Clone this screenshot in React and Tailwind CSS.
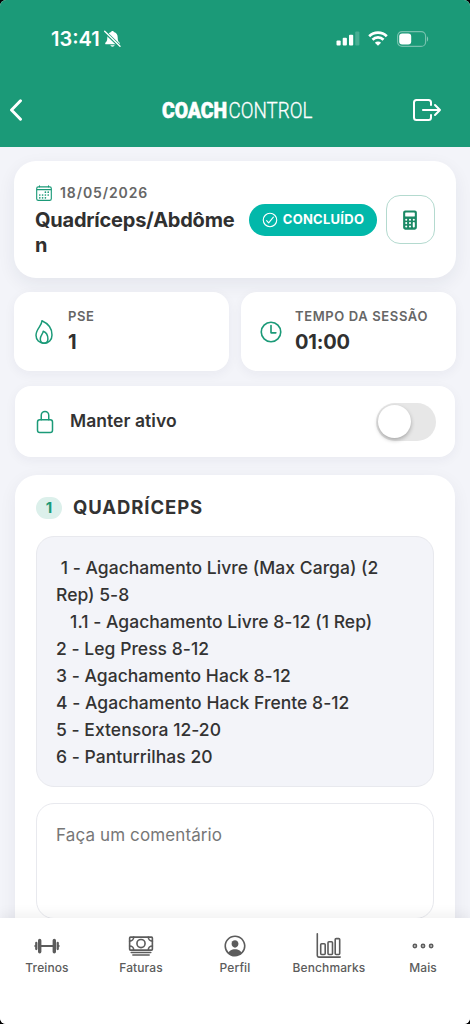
import {
  IoExitOutline,
  IoCalculator,
  IoTimeOutline,
  IoLockClosedOutline,
  IoCheckmarkCircleOutline,
  IoPersonCircleOutline,
  IoCalendarOutline,
  IoCashOutline,
  IoEllipsisHorizontalOutline,
} from 'react-icons/io5';

const exercises = [
  ' 1 - Agachamento Livre (Max Carga) (2',
  'Rep) 5-8',
  '   1.1 - Agachamento Livre 8-12 (1 Rep)',
  '2 - Leg Press 8-12',
  '3 - Agachamento Hack 8-12',
  '4 - Agachamento Hack Frente 8-12',
  '5 - Extensora 12-20',
  '6 - Panturrilhas 20',
];

function BellOff() {
  return (
    <svg className="h-[18px] w-[17px]" viewBox="0 0 17 18" fill="white">
      <path d="M8.5 1c-.8 0-1.3.5-1.4 1.1C4.600 2.800 3.300 5 3.300 7.500c0 3-.6 4-1.700 5.100-.4.400-.5.800-.4 1.100.1.400.4.600.9.600h12.800c.5 0 .8-.2.900-.6.100-.3 0-.7-.4-1.100-1.100-1.100-1.700-2.100-1.700-5.100 0-2.500-1.300-4.700-3.800-5.400C9.800 1.500 9.300 1 8.500 1zM6.300 15.300a2.300 2.100 0 0 0 4.400 0z" />
      <path d="M.2 1.200 16.600 17" stroke="#1b9a78" strokeWidth="3.200" />
      <path d="M.7 1.200 16 16.200" stroke="white" strokeWidth="1.400" strokeLinecap="round" />
    </svg>
  );
}

function Signal() {
  return (
    <svg className="h-[15px] w-[24px]" viewBox="0 0 24 15" fill="white">
      <rect x="0.500" y="9.500" width="4.200" height="5" rx="1" />
      <rect x="6.700" y="6.700" width="4.200" height="7.800" rx="1" />
      <rect x="13" y="3.700" width="4.200" height="10.800" rx="1" />
      <rect x="19.200" y="0.500" width="4.200" height="14" rx="1" opacity=".2" />
    </svg>
  );
}

function Wifi() {
  return (
    <svg className="h-[15px] w-[20px]" viewBox="0 0 20 15" fill="none" stroke="white" strokeWidth="2.700">
      <path d="M1.200 5.200a12.500 12.500 0 0 1 17.600 0" />
      <path d="M4.500 8.700a7.800 7.800 0 0 1 11 0" />
      <path d="M10 14.800 6.900 11.700a4.400 4.400 0 0 1 6.200 0z" fill="white" stroke="none" />
    </svg>
  );
}

function Battery() {
  return (
    <svg className="h-[16px] w-[32px]" viewBox="0 0 32 16" fill="none">
      <rect x=".6" y=".6" width="28" height="14.800" rx="4.500" stroke="white" strokeOpacity=".4" strokeWidth="1.200" />
      <path d="M30 5.500c1.500.6 1.500 4.400 0 5z" fill="white" opacity=".45" />
      <rect x="2.200" y="2.400" width="12" height="11.200" rx="3" fill="white" />
    </svg>
  );
}

function Logo() {
  return (
    <div className="flex w-[152px]">
      <svg className="h-[36px] w-[66px] overflow-visible" viewBox="0 0 66 36" fill="white" fontFamily="Roboto, sans-serif" fontSize="22.8">
        <text x="0" y="26" fontWeight="900" textLength="65" lengthAdjust="spacingAndGlyphs" stroke="white" strokeWidth=".6">COACH</text>
      </svg>
      <svg className="h-[36px] w-[86px] overflow-visible" viewBox="0 0 86 36" fill="white" fontFamily="Roboto, sans-serif" fontSize="22.8">
        <text x="0.500" y="26" fontWeight="300" textLength="84" lengthAdjust="spacingAndGlyphs" stroke="white" strokeWidth=".3">CONTROL</text>
      </svg>
    </div>
  );
}

function Flame() {
  return (
    <svg className="h-[24px] w-[18px]" viewBox="0 0 18 24" fill="none" stroke="#1b9a78" strokeWidth="1.500" strokeLinejoin="round">
      <path d="M6.900 .8C7.200 5.500 1 9 1 15.200c0 4.700 3.400 8 8 8s8-3.300 8-8.300C17 7.800 12.500 3.300 6.900 .8z" />
      <path d="M8.200 11.200c0 2.500-2.900 4.300-2.900 7.800 0 2.600 1.500 4.200 3.700 4.200s3.900-1.600 3.900-4.200c0-3.900-2.100-6.800-4.700-7.800z" />
    </svg>
  );
}

function Barbell() {
  return (
    <svg className="h-[24px] w-[26px]" viewBox="0 0 26 24" fill="none" stroke="#5c5c5c" strokeLinecap="round">
      <path d="M5.500 12h15M1.200 11.900v.2M24.800 11.900v.2" strokeWidth="1.800" />
      <path d="M5.700 6.500v11.200M20.300 6.500v11.200" strokeWidth="3.400" />
      <path d="M2.300 9v6M23.700 9v6" strokeWidth="2.300" />
    </svg>
  );
}

function Chart() {
  return (
    <svg className="h-[26px] w-[26px]" viewBox="0 0 26 26" fill="none" stroke="#5c5c5c" strokeWidth="1.600" strokeLinecap="round" strokeLinejoin="round">
      <path d="M1.300 .8v21.800q0 1.500 1.500 1.500h21.400" />
      <rect x="4.700" y="10.800" width="4.500" height="10.700" rx="1" />
      <rect x="12" y="8.700" width="4.500" height="12.800" rx="1" />
      <rect x="19.200" y="5.600" width="4.500" height="15.900" rx="1" />
    </svg>
  );
}

const tabs = [
  { label: 'Treinos', icon: <Barbell /> },
  { label: 'Faturas', icon: <IoCashOutline size={26} /> },
  { label: 'Perfil', icon: <IoPersonCircleOutline size={26} /> },
  { label: 'Benchmarks', icon: <Chart /> },
  { label: 'Mais', icon: <IoEllipsisHorizontalOutline size={26} /> },
];

function Metric({ icon, label, value }) {
  return (
    <div className="flex h-[79px] flex-1 items-center rounded-2xl bg-white pl-[17px] shadow-[0_3px_12px_rgba(30,40,70,0.05)]">
      <div className="flex w-[25px] justify-center text-[#1b9a78]">{icon}</div>
      <div className="ml-3 -mt-[2px] whitespace-nowrap">
        <div className="text-[13px] leading-[20px] font-semibold tracking-[0.62px] text-[#666]">{label}</div>
        <div className="mt-[3px] text-[20px] leading-[26px] font-bold tracking-[-0.2px] text-[#303030]">{value}</div>
      </div>
    </div>
  );
}

export default function App() {
  return (
    <div className="h-[1024px] w-[470px] overflow-hidden bg-black font-['Inter',sans-serif] text-[#333]">
      <div className="flex h-full flex-col overflow-hidden rounded-[6px] bg-[#f3f4f9]">
        <header className="h-[147px] shrink-0 bg-[#1b9a78] text-white">
          <div className="flex h-[75px] items-center pt-[2px] pr-[41px] pl-[51px]">
            <span className="text-[20px] font-semibold tracking-[0px]">13:41</span>
            <span className="ml-[4px]"><BellOff /></span>
            <span className="ml-auto"><Signal /></span>
            <span className="ml-[8px]"><Wifi /></span>
            <span className="ml-[9px]"><Battery /></span>
          </div>
          <div className="flex h-[70px] items-center justify-between pr-[27px] pl-[3px]">
            <div className="w-[158px] pl-[6px]">
              <svg className="h-[22px] w-[14px]" viewBox="0 0 14 22" fill="none" stroke="white" strokeWidth="2.900" strokeLinecap="round" strokeLinejoin="round">
                <path d="M11.500 1.800 2.500 11l9 9.200" />
              </svg>
            </div>
            <Logo />
            <div className="flex w-[128px] justify-end"><IoExitOutline size={32} /></div>
          </div>
        </header>

        <main className="flex min-h-0 flex-1 flex-col overflow-hidden px-[14px] pt-[14px]">
          <section className="flex h-[117px] shrink-0 items-center rounded-[22px] bg-white pr-[21px] pl-[21px] shadow-[0_6px_18px_rgba(30,40,70,0.07)]">
            <div className="w-[202px]">
              <div className="flex items-center gap-[7px] pt-px text-[14px] leading-[20px] font-semibold tracking-[0.9px] text-[#666]">
                <IoCalendarOutline size={18} className="text-[#1b9a78]" />
                18/05/2026
              </div>
              <h1 className="mt-[5px] text-[20px] leading-[25px] font-bold tracking-[-0.23px] whitespace-nowrap text-[#303030]">
                Quadríceps/Abdôme<br />n
              </h1>
            </div>
            <div className="ml-[12px] flex h-[32px] w-[128px] shrink-0 items-center justify-center gap-[4px] rounded-full bg-[#02b8aa] text-[13px] font-bold tracking-[0.25px] text-white">
              <IoCheckmarkCircleOutline size={18} className="-ml-px" />
              CONCLUÍDO
            </div>
            <div className="ml-auto flex size-[49px] shrink-0 items-center justify-center rounded-[14px] border border-[#b4dacf] pr-[2px] text-[#1b8965]">
              <IoCalculator size={22} />
            </div>
          </section>

          <section className="mt-[14px] flex shrink-0 gap-[12px]">
            <Metric icon={<Flame />} label="PSE" value="1" />
            <Metric icon={<IoTimeOutline size={26} className="shrink-0" />} label="TEMPO DA SESSÃO" value="01:00" />
          </section>

          <section className="mx-px mt-[15px] flex h-[71px] shrink-0 items-center rounded-2xl bg-white pr-[19px] pl-[18px] shadow-[0_3px_12px_rgba(30,40,70,0.05)]">
            <IoLockClosedOutline size={24} className="text-[#1b9a78]" />
            <span className="ml-[13px] text-[17.5px] font-semibold tracking-[0.05px]">Manter ativo</span>
            <div className="ml-auto flex h-[38px] w-[60px] items-center rounded-full bg-[#e7e7e7] pl-[2px]">
              <div className="size-[33px] rounded-full bg-white shadow-[0_2px_4px_rgba(0,0,0,0.28)]" />
            </div>
          </section>

          <section className="mx-px mt-[18px] h-[550px] shrink-0 rounded-[22px] bg-white px-[21px] shadow-[0_5px_18px_rgba(30,40,70,0.06)]">
            <div className="flex h-[61px] items-center pt-[5px]">
              <span className="flex h-[22px] w-[26px] items-center justify-center rounded-full bg-[#dcf0eb] text-[15px] font-bold text-[#1b9a78]">1</span>
              <h2 className="ml-[11px] text-[18.5px] font-[650] tracking-[0.9px]">QUADRÍCEPS</h2>
            </div>
            <div className="h-[251px] rounded-[18px] border border-[#e8e9ee] bg-[#f3f4f9] px-[19px] pt-[17px] text-[17.5px] leading-[27px] font-[450] tracking-[0.03px] whitespace-pre">
              {exercises.map((line) => (
                <div key={line}>{line}</div>
              ))}
            </div>
            <div className="mt-[16px] h-[116px] rounded-[18px] border border-[#e8e9ee] px-[19px] pt-[18px] text-[17px] leading-[26px] tracking-[0.12px] text-[#777]">
              Faça um comentário
            </div>
          </section>
        </main>

        <nav className="relative grid h-[106px] shrink-0 grid-cols-5 bg-white shadow-[0_-4px_12px_rgba(0,0,0,0.06)]">
          {tabs.map(({ label, icon }) => (
            <div key={label} className="flex flex-col items-center pt-[14px] text-[#5c5c5c]">
              <div className="flex h-[27px] items-center">{icon}</div>
              <span className="mt-px text-[12px] leading-[16px] font-medium tracking-[0.1px]">{label}</span>
            </div>
          ))}
        </nav>
      </div>
    </div>
  );
}
